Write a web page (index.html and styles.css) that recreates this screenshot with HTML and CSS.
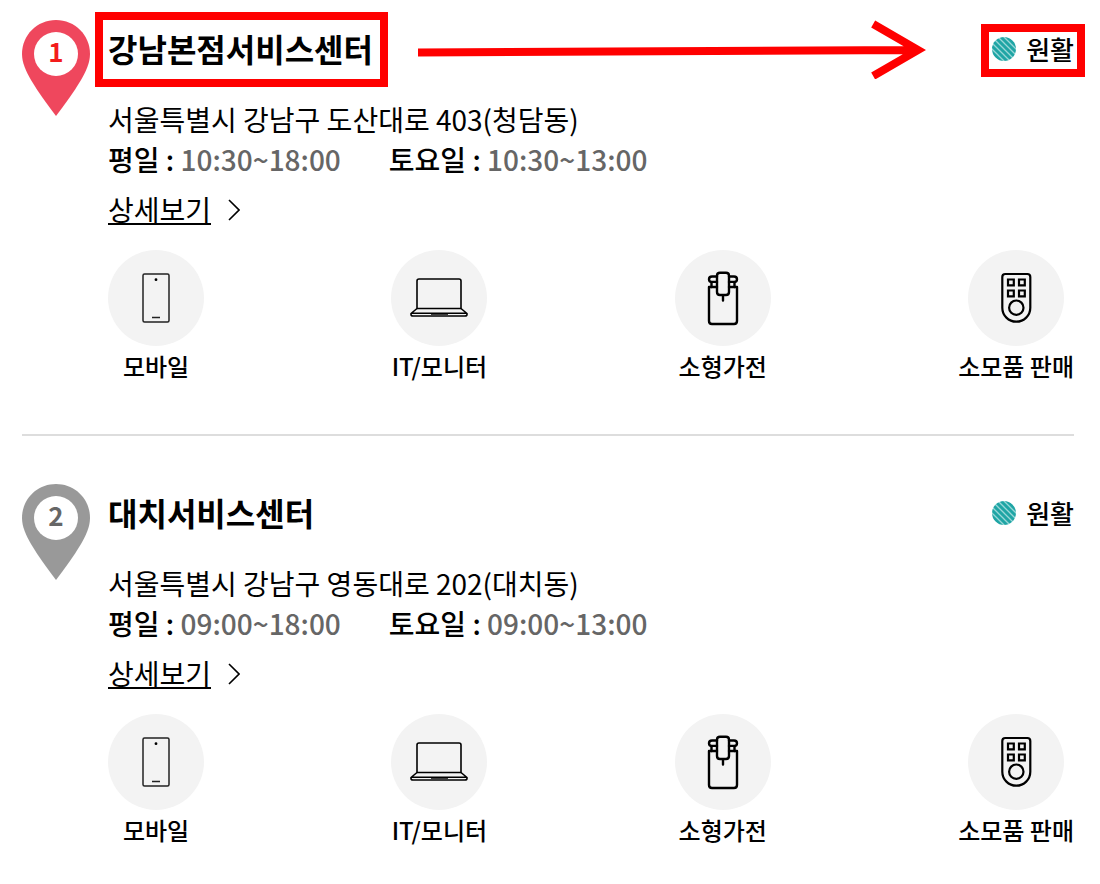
FILE: index.html
```html
<!DOCTYPE html>
<html lang="ko">
    <head>
        <meta charset="utf-8">
        <meta name="viewport" content="width=device-width, initial-scale=1">
        <title>서비스센터 찾기</title>
        <link rel="stylesheet" href="styles.css">
    </head>
    <body>

        <!-- 공통 아이콘 -->
        <svg class="sprite" aria-hidden="true">
            <defs>
                <pattern id="stripe" width="6" height="6" patternUnits="userSpaceOnUse">
                    <rect width="6" height="6" fill="#1fa5a5"/>
                    <path d="M-1 -1l8 8M-1 5l2 2M5 -1l2 2" stroke="#9ad8d8" stroke-width="1.3"/>
                </pattern>
            </defs>
            <symbol id="pin" viewBox="0 0 68 96">
                <path fill="currentColor" d="M34 0C15 0 0 15 0 34c0 9 4 17 9 26 7 12 16 24 25 36 9-12 18-24 25-36 5-9 9-17 9-26C68 15 53 0 34 0z"/>
                <circle cx="34" cy="34" r="22" fill="#fff"/>
            </symbol>
            <symbol id="dot" viewBox="0 0 24 24">
                <circle cx="12" cy="12" r="12" fill="url(#stripe)"/>
            </symbol>
            <symbol id="chevron" viewBox="0 0 12 22">
                <path d="M1 1l10 10L1 21" fill="none" stroke="#000" stroke-width="1.6"/>
            </symbol>
            <symbol id="mobile" viewBox="0 0 96 96">
                <g fill="none" stroke="#222" stroke-width="1.5">
                    <rect x="35" y="24" width="26" height="48" rx="1.5"/>
                    <path d="M44 67.500h8"/>
                </g>
                <circle cx="48" cy="29.700" r="1.400"/>
            </symbol>
            <symbol id="laptop" viewBox="0 0 96 96">
                <g fill="none" stroke="#000" stroke-width="1.6" stroke-linejoin="round">
                    <path d="M26 58.500V31q0-2 2-2h40q2 0 2 2v27.500z"/>
                    <path d="M26 58.500l-6 5v1q0 1.500 2 1.500h52q2 0 2-1.500v-1l-6-5M20 63.200h56M40 64h17"/>
                </g>
            </symbol>
            <symbol id="vacuum" viewBox="0 0 96 96">
                <g fill="none" stroke="#000" stroke-width="2.4" stroke-linejoin="round" stroke-linecap="round">
                    <path d="M42 37h-8v34q0 3 3 3h22q3 0 3-3V37h-8"/>
                    <path d="M42 26.500h-5q-3 0-3 2.700t3 2.700h5M54 26.500h5q3 0 3 2.700t-3 2.700h-5M36.500 32v5M59.500 32v5"/>
                    <path d="M45 22.700h6q3 0 3 3V42q0 3-3 3h-6q-3 0-3-3V25.700q0-3 3-3zM48 46v4.500"/>
                </g>
            </symbol>
            <symbol id="remote" viewBox="0 0 96 96">
                <g fill="none" stroke="#000" stroke-width="2.200">
                    <path d="M34.300 27q0-3 3-3h22q3 0 3 3v30.700a14 14 0 0 1-28 0z"/>
                    <path d="M40 29.500h5.800v5.800h-5.800zM51 29.500h5.800v5.800h-5.800zM40 40.500h5.800v5.800h-5.800zM51 40.500h5.800v5.800h-5.800z"/>
                    <circle cx="48.300" cy="57.700" r="7.200"/>
                </g>
            </symbol>
        </svg>

        <ul class="center-list">
            <li class="center active">
                <div class="pin">
                    <svg><use href="#pin"/></svg>
                    <span>1</span>
                </div>
                <div class="info">
                    <div class="head">
                        <h2 class="name marked">강남본점서비스센터</h2>
                        <svg class="arrow" viewBox="0 0 508 60" preserveAspectRatio="none" aria-hidden="true">
                            <path d="M0 33.500L498 31M455 5l45 26-45 26" fill="none" stroke="#f00" stroke-width="8"/>
                        </svg>
                        <p class="status marked"><svg><use href="#dot"/></svg>원활</p>
                    </div>
                    <p class="address">서울특별시 강남구 도산대로 403(청담동)</p>
                    <dl class="hours">
                        <div><dt>평일 :</dt> <dd>10:30~18:00</dd></div>
                        <div><dt>토요일 :</dt> <dd>10:30~13:00</dd></div>
                    </dl>
                    <a class="detail" href="#"><span>상세보기</span><svg><use href="#chevron"/></svg></a>
                    <ul class="services">
                        <li><svg><use href="#mobile"/></svg>모바일</li>
                        <li><svg><use href="#laptop"/></svg>IT/모니터</li>
                        <li><svg><use href="#vacuum"/></svg>소형가전</li>
                        <li><svg><use href="#remote"/></svg>소모품 판매</li>
                    </ul>
                </div>
            </li>
            <li class="center">
                <div class="pin">
                    <svg><use href="#pin"/></svg>
                    <span>2</span>
                </div>
                <div class="info">
                    <div class="head">
                        <h2 class="name">대치서비스센터</h2>
                        <p class="status"><svg><use href="#dot"/></svg>원활</p>
                    </div>
                    <p class="address">서울특별시 강남구 영동대로 202(대치동)</p>
                    <dl class="hours">
                        <div><dt>평일 :</dt> <dd>09:00~18:00</dd></div>
                        <div><dt>토요일 :</dt> <dd>09:00~13:00</dd></div>
                    </dl>
                    <a class="detail" href="#"><span>상세보기</span><svg><use href="#chevron"/></svg></a>
                    <ul class="services">
                        <li><svg><use href="#mobile"/></svg>모바일</li>
                        <li><svg><use href="#laptop"/></svg>IT/모니터</li>
                        <li><svg><use href="#vacuum"/></svg>소형가전</li>
                        <li><svg><use href="#remote"/></svg>소모품 판매</li>
                    </ul>
                </div>
            </li>
        </ul>

    </body>
</html>
```
FILE: styles.css
```css
body {
    margin: 0;
    font-family: 'Noto Sans CJK JP', 'Noto Sans CJK KR', sans-serif;
    font-feature-settings: 'locl' 0; /* 콜론을 기준선에 맞춤 */
    font-size: 28px;
    line-height: 40px;
    background-color: #fff;
    color: #000;
}

h2, p, ul, dl, dd {
    margin: 0;
    padding: 0;
}

ul {
    list-style: none;
}

.sprite {
    position: absolute;
    width: 0;
    height: 0;
}

.center-list {
    padding: 20px 26px 0 22px;
}

.center {
    display: flex;
    gap: 18px;
    padding-bottom: 48px;
}

.center + .center {
    border-top: 2px solid #ddd;
    padding-top: 48px;
    padding-bottom: 0;
}

/* 번호 핀 */
.pin {
    position: relative;
    flex: none;
    width: 68px;
    height: 96px;
    color: #999;
}

.pin svg {
    display: block;
    width: 100%;
    height: 100%;
}

.pin span {
    position: absolute;
    top: 11px;
    left: 0;
    width: 100%;
    text-align: center;
    font-size: 26px;
    font-weight: 700;
    color: #666;
}

.active .pin {
    color: #ef475d;
}

.active .pin span {
    color: #f31c1c;
}

.info {
    flex: 1;
}

.head {
    display: flex;
    align-items: center;
    justify-content: space-between;
    height: 58px;
    margin-bottom: 21px;
}

.name {
    padding-bottom: 2px;
    font-size: 32px;
    font-weight: 700;
    line-height: 56px;
}

.status {
    display: flex;
    align-items: center;
    gap: 10px;
    font-size: 26px;
    font-weight: 500;
    line-height: 36px;
}

.status svg {
    width: 24px;
    height: 24px;
}

/* 강조 표시 */
.marked {
    position: relative;
}

.marked::after {
    content: '';
    position: absolute;
    inset: -8px -15px -9px -13px;
    border: 8px solid #f00;
}

.status.marked::after {
    inset: -7px -11px -10px;
}

.arrow {
    flex: 1;
    height: 60px;
    margin: 0 66px 0 45px;
}

.hours {
    display: flex;
    gap: 48px;
    font-weight: 500;
}

.hours dt,
.hours dd {
    display: inline;
}

.hours dd {
    color: #666;
}

.detail {
    display: flex;
    align-items: center;
    gap: 17px;
    width: fit-content;
    height: 40px;
    margin: 11px 0 20px;
    color: #000;
    text-decoration: none;
}

.detail span {
    line-height: 28px;
    border-bottom: 2px solid #000;
}

.detail svg {
    width: 12px;
    height: 22px;
}

.services {
    display: flex;
    justify-content: space-between;
}

.services li {
    display: flex;
    flex-direction: column;
    align-items: center;
    font-size: 24px;
    font-weight: 500;
    line-height: 40px;
}

.services svg {
    width: 96px;
    height: 96px;
    border-radius: 50%;
    background-color: #f3f3f3;
}
```
